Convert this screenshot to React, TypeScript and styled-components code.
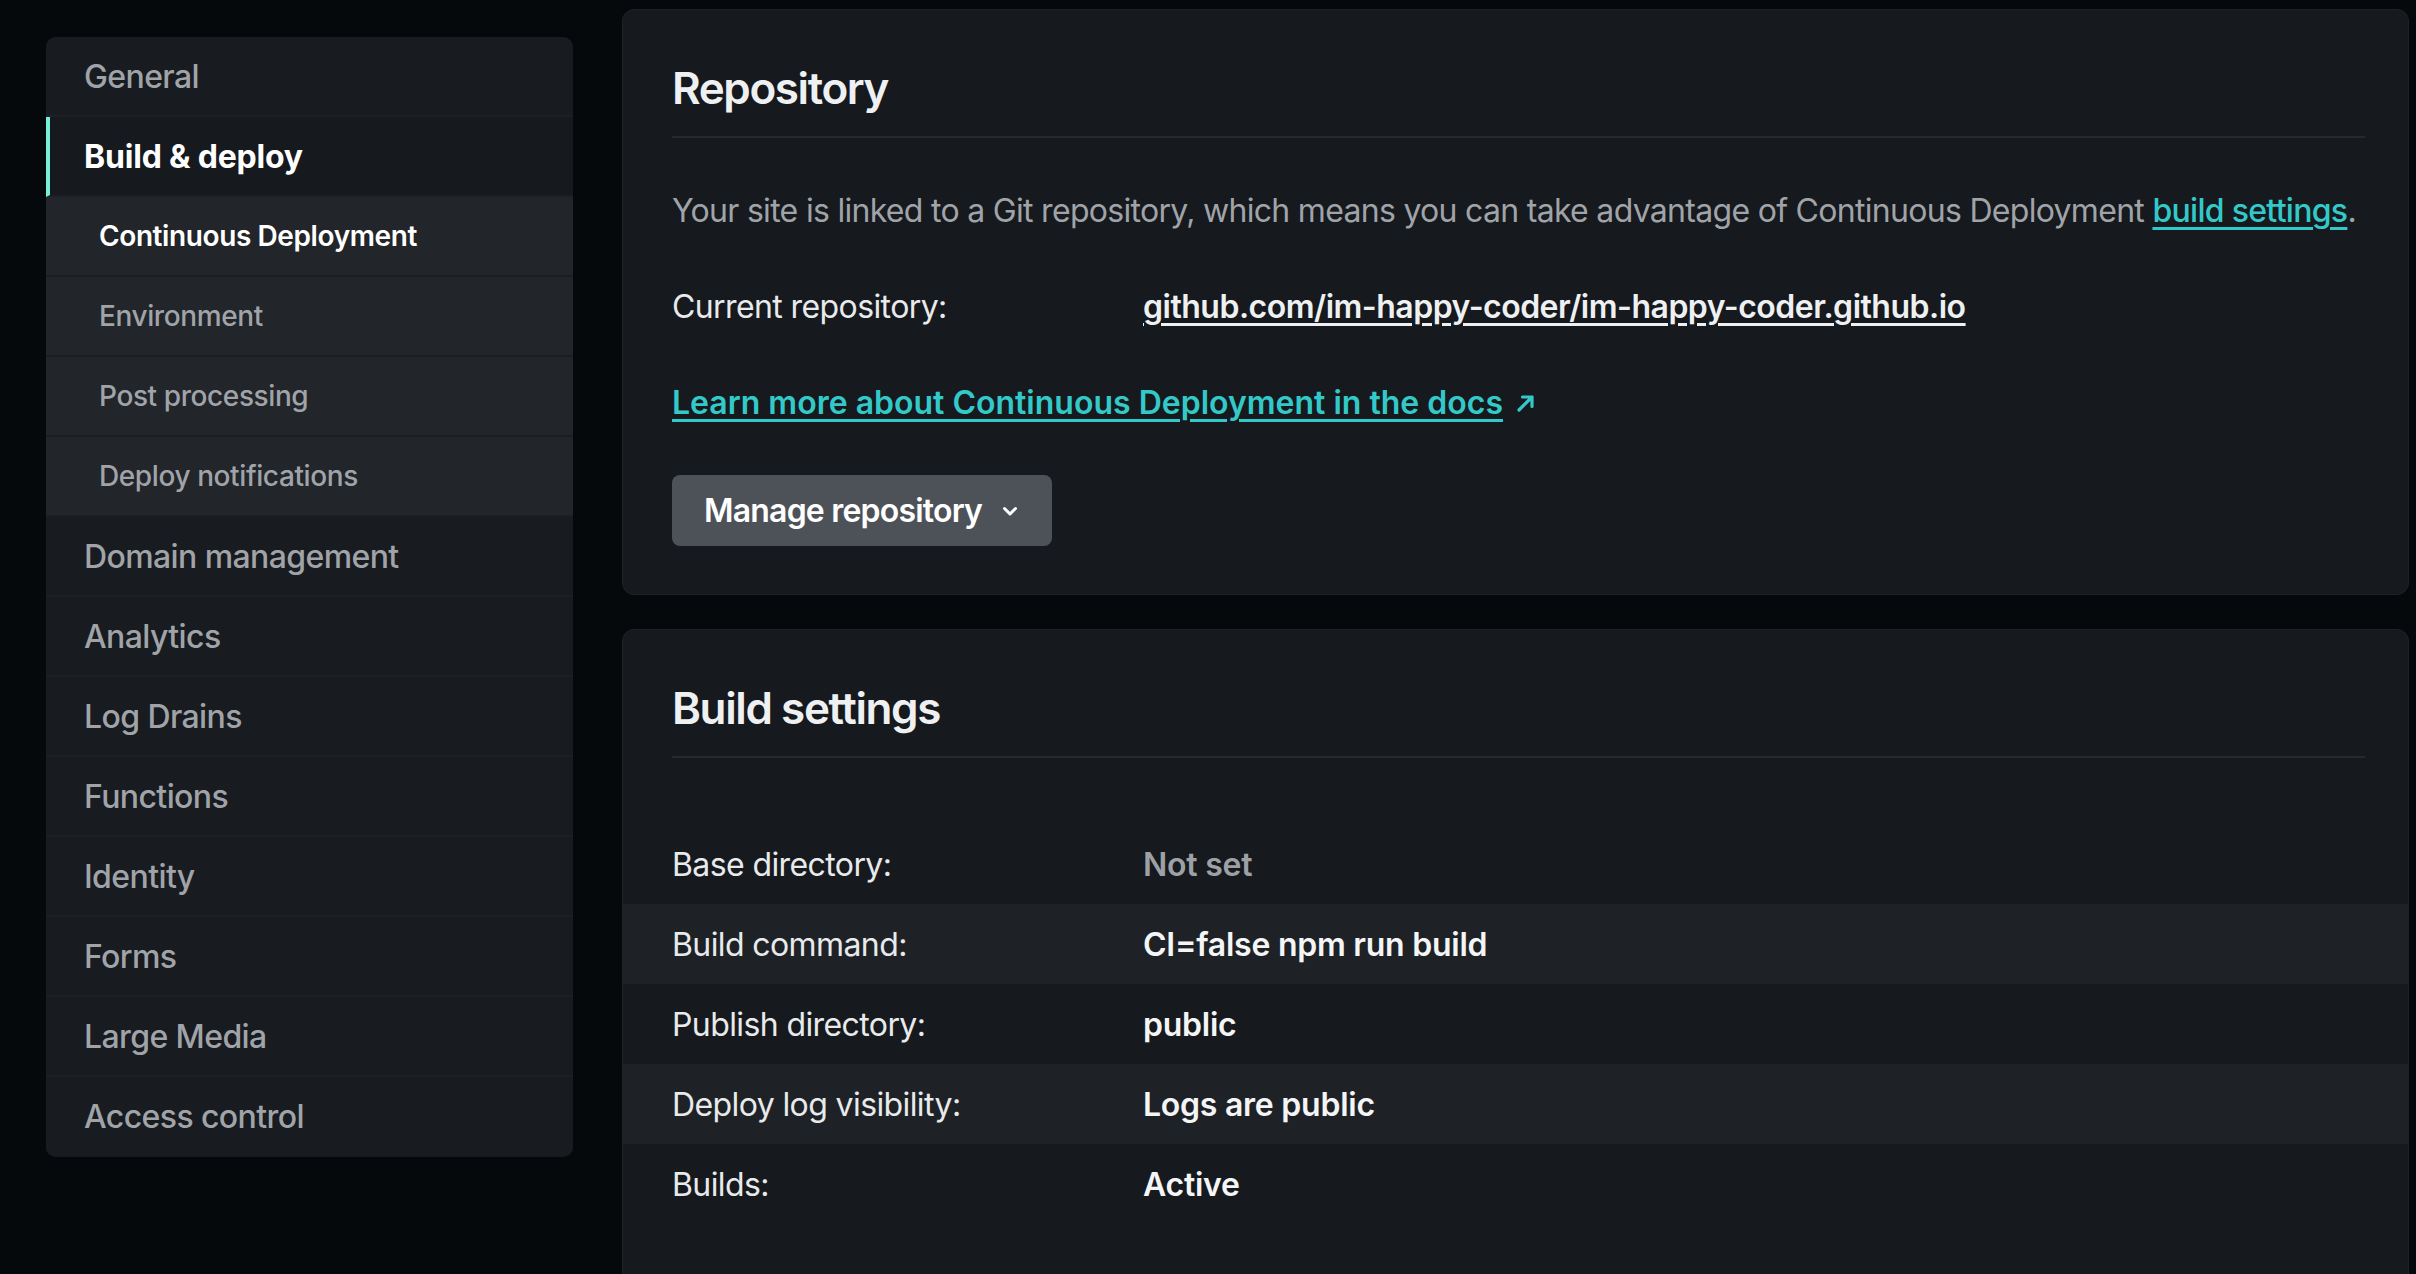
import React from 'react';
import styled, { createGlobalStyle } from 'styled-components';

const GlobalStyle = createGlobalStyle`
  html, body {
    margin: 0;
    padding: 0;
    background: #05090b;
  }
  body {
    font-family: Inter, 'Noto Sans', 'Liberation Sans', sans-serif;
    color: #eceef0;
    -webkit-font-smoothing: antialiased;
  }
`;

const Page = styled.div`
  display: flex;
  align-items: flex-start;
  gap: 49px;
  padding: 0 7px 0 46px;
  min-height: 100vh;
  box-sizing: border-box;
  overflow: hidden;
`;

const Sidebar = styled.nav`
  flex: 0 0 527px;
  margin-top: 37px;
  padding-bottom: 2px;
  display: flex;
  flex-direction: column;
  background: #181b1f;
  border-radius: 10px;
  overflow: hidden;
`;

const NavItem = styled.a<{ $sub?: boolean; $active?: boolean; $current?: boolean }>`
  display: flex;
  align-items: center;
  height: 78px;
  padding-left: ${({ $sub, $active }) => ($sub ? '53px' : $active ? '34px' : '38px')};
  border-left: ${({ $active }) => ($active ? '4px solid #75efd6' : 'none')};
  border-bottom: 2px solid ${({ $sub }) => ($sub ? '#1b1e22' : '#1c1f23')};
  background: ${({ $sub, $active }) => ($sub ? '#222529' : $active ? '#16191d' : '#181b1f')};
  font-size: ${({ $sub }) => ($sub ? '28px' : '32px')};
  letter-spacing: ${({ $sub, $active }) => ($sub ? '-0.4px' : $active ? '-0.2px' : '-0.6px')};
  font-weight: ${({ $active, $current }) => ($active ? 700 : $current ? 600 : 500)};
  color: ${({ $active, $current }) => ($active || $current ? '#ffffff' : '#a0a4a9')};
  text-decoration: none;
  cursor: pointer;

  &:last-child {
    border-bottom: none;
  }
`;

const Main = styled.main`
  flex: 1;
  display: flex;
  flex-direction: column;
  gap: 34px;
  padding-top: 9px;
  min-width: 0;
`;

const Card = styled.section`
  background: #16191d;
  border: 1px solid #1e2226;
  border-radius: 12px;
`;

const CardHeader = styled.header`
  margin: 0 43px 0 49px;
  padding: 50px 0 20px;
  border-bottom: 2px solid #26292d;
`;

const Title = styled.h2`
  margin: 0;
  font-size: 44px;
  line-height: 56px;
  font-weight: 600;
  letter-spacing: -1.4px;
  color: #eef0f2;
`;

const CardBody = styled.div`
  display: flex;
  flex-direction: column;
  align-items: flex-start;
  gap: 48px;
  padding: 49px 43px 48px 49px;
`;

const Lead = styled.p`
  margin: 0;
  font-size: 32px;
  line-height: 48px;
  letter-spacing: -0.7px;
  color: #a0a4a9;
  white-space: nowrap;
`;

const TealLink = styled.a`
  color: #33c9c9;
  font-weight: 500;
  text-decoration: underline;
  text-decoration-thickness: 3px;
  text-underline-offset: 5px;
  cursor: pointer;
`;

const InfoRow = styled.div`
  display: grid;
  grid-template-columns: 471px 1fr;
  align-items: center;
  width: 100%;
  font-size: 32px;
  line-height: 48px;
`;

const Label = styled.span`
  color: #e8eaec;
  font-weight: 400;
  letter-spacing: -0.6px;
`;

const RepoLink = styled.a`
  color: #eef0f2;
  font-weight: 600;
  letter-spacing: -0.5px;
  text-decoration: underline;
  text-decoration-thickness: 3px;
  text-underline-offset: 5px;
  cursor: pointer;
`;

const DocsLink = styled.a`
  display: inline-flex;
  align-items: center;
  gap: 13px;
  color: #33c9c9;
  font-size: 32px;
  line-height: 48px;
  font-weight: 600;
  cursor: pointer;
`;

const DocsText = styled.span`
  text-decoration: underline;
  text-decoration-thickness: 3px;
  text-underline-offset: 5px;
`;

const Button = styled.button`
  display: inline-flex;
  align-items: center;
  gap: 20px;
  height: 71px;
  padding: 0 34px 0 32px;
  border: none;
  border-radius: 8px;
  background: #4d5158;
  color: #ffffff;
  font-family: inherit;
  font-size: 32px;
  font-weight: 600;
  letter-spacing: -0.8px;
  cursor: pointer;
`;

const SettingsList = styled.div`
  display: flex;
  flex-direction: column;
  padding: 66px 0 60px;
`;

const SettingRow = styled.div<{ $striped?: boolean }>`
  display: grid;
  grid-template-columns: 471px 1fr;
  align-items: center;
  height: 80px;
  padding-left: 49px;
  background: ${({ $striped }) => ($striped ? '#1e2226' : 'transparent')};
  font-size: 32px;
`;

const Value = styled.span<{ $muted?: boolean }>`
  font-weight: 600;
  letter-spacing: -0.25px;
  color: ${({ $muted }) => ($muted ? '#9da1a6' : '#f4f5f6')};
`;

const ArrowIcon = () => (
  <svg width="20" height="20" viewBox="0 0 20 20" fill="none">
    <path d="M3 17 L16 4 M6.5 4 H16 V13.5" stroke="#33c9c9" strokeWidth="3.2" strokeLinecap="round" strokeLinejoin="round" />
  </svg>
);

const ChevronIcon = () => (
  <svg width="16" height="16" viewBox="0 0 16 16" fill="none">
    <path d="M2.5 5.5 L8 11 L13.5 5.5" stroke="#ffffff" strokeWidth="3" strokeLinecap="round" strokeLinejoin="round" />
  </svg>
);

const navItems: { label: string; sub?: boolean; active?: boolean; current?: boolean }[] = [
  { label: 'General' },
  { label: 'Build & deploy', active: true },
  { label: 'Continuous Deployment', sub: true, current: true },
  { label: 'Environment', sub: true },
  { label: 'Post processing', sub: true },
  { label: 'Deploy notifications', sub: true },
  { label: 'Domain management' },
  { label: 'Analytics' },
  { label: 'Log Drains' },
  { label: 'Functions' },
  { label: 'Identity' },
  { label: 'Forms' },
  { label: 'Large Media' },
  { label: 'Access control' },
];

const settings: { label: string; value: string; muted?: boolean }[] = [
  { label: 'Base directory:', value: 'Not set', muted: true },
  { label: 'Build command:', value: 'CI=false npm run build' },
  { label: 'Publish directory:', value: 'public' },
  { label: 'Deploy log visibility:', value: 'Logs are public' },
  { label: 'Builds:', value: 'Active' },
];

const App: React.FC = () => (
  <>
    <GlobalStyle />
    <Page>
      <Sidebar>
        {navItems.map((item) => (
          <NavItem key={item.label} $sub={item.sub} $active={item.active} $current={item.current}>
            {item.label}
          </NavItem>
        ))}
      </Sidebar>

      <Main>
        <Card>
          <CardHeader>
            <Title>Repository</Title>
          </CardHeader>
          <CardBody>
            <Lead>
              Your site is linked to a Git repository, which means you can take advantage of Continuous Deployment{' '}
              <TealLink>build settings</TealLink>.
            </Lead>
            <InfoRow>
              <Label>Current repository:</Label>
              <span>
                <RepoLink>github.com/im-happy-coder/im-happy-coder.github.io</RepoLink>
              </span>
            </InfoRow>
            <DocsLink>
              <DocsText>Learn more about Continuous Deployment in the docs</DocsText>
              <ArrowIcon />
            </DocsLink>
            <Button>
              Manage repository
              <ChevronIcon />
            </Button>
          </CardBody>
        </Card>

        <Card>
          <CardHeader>
            <Title>Build settings</Title>
          </CardHeader>
          <SettingsList>
            {settings.map((row, i) => (
              <SettingRow key={row.label} $striped={i % 2 === 1}>
                <Label>{row.label}</Label>
                <Value $muted={row.muted}>{row.value}</Value>
              </SettingRow>
            ))}
          </SettingsList>
        </Card>
      </Main>
    </Page>
  </>
);

export default App;
